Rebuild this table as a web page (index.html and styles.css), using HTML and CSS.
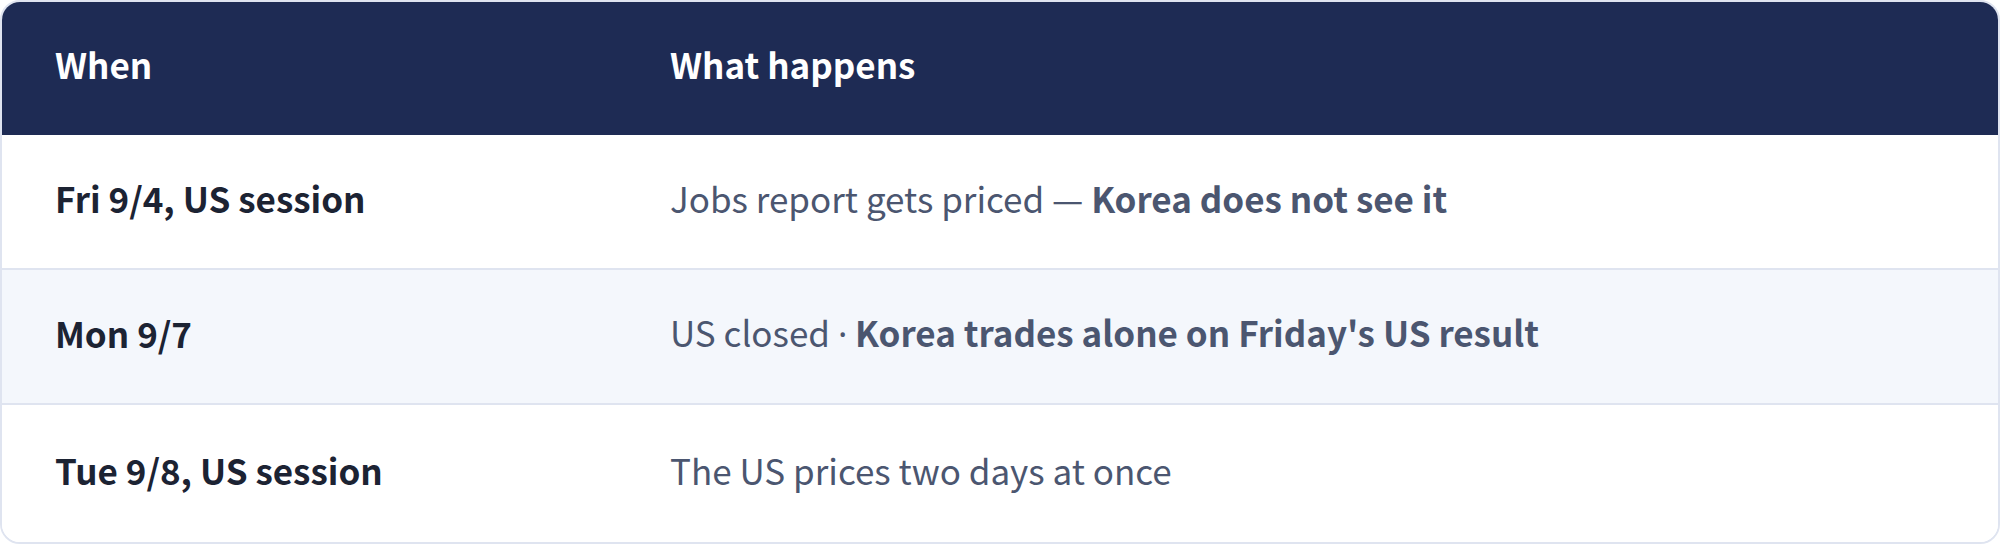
FILE: index.html
```html
<!DOCTYPE html>
<html lang="en">
<head>
<meta charset="utf-8">
<link rel="stylesheet" href="styles.css">
</head>
<body>
<div class="table">
  <div class="row head">
    <div class="cell c1">When</div>
    <div class="cell c2">What happens</div>
  </div>
  <div class="row">
    <div class="cell c1">Fri 9/4, US session</div>
    <div class="cell c2">Jobs report gets priced — <strong>Korea does not see it</strong></div>
  </div>
  <div class="row alt">
    <div class="cell c1">Mon 9/7</div>
    <div class="cell c2">US closed <span class="sep">·</span> <strong>Korea trades alone on Friday's US result</strong></div>
  </div>
  <div class="row last">
    <div class="cell c1">Tue 9/8, US session</div>
    <div class="cell c2">The US prices two days at once</div>
  </div>
</div>
</body>
</html>
```
FILE: styles.css
```css
* { box-sizing: border-box; }
html, body { margin: 0; padding: 0; background: #ffffff; }
body {
  font-family: "Noto Sans CJK KR", "Noto Sans", sans-serif;
  width: 2000px;
  height: 544px;
}
.table {
  width: 2000px;
  height: 544px;
  border: 2px solid #dfe4f0;
  border-radius: 20px;
  overflow: hidden;
  display: flex;
  flex-direction: column;
}
.row {
  display: grid;
  grid-template-columns: 615px 1fr;
  align-items: center;
  height: 135px;
  border-bottom: 2px solid #dfe4f0;
  background: #ffffff;
}
.row.head {
  height: 133px;
  background: #1e2b54;
  border-bottom: none;
}
.row.alt { background: #f4f7fc; }
.row.last { border-bottom: none; flex: 1; }
.cell {
  padding: 0 53px 8px 53px;
  font-size: 35px;
  line-height: 48px;
  white-space: nowrap;
}
.head .cell {
  color: #ffffff;
  font-weight: 700;
  padding-bottom: 10px;
}
.c1 {
  color: #1c2333;
  font-weight: 700;
}
.c2 {
  color: #4b5670;
  font-weight: 400;
}
.c2 strong { font-weight: 700; }
.sep { font-family: "Noto Sans", sans-serif; }
```
